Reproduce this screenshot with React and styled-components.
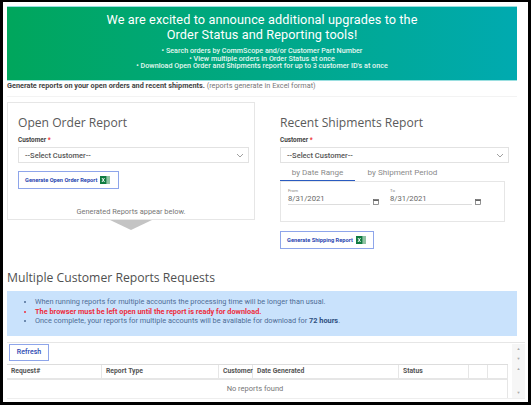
import React from 'react';
import styled, { createGlobalStyle } from 'styled-components';

const GlobalStyle = createGlobalStyle`
    html, body {
        margin: 0;
        padding: 0;
        background: #000;
    }
    * {
        box-sizing: border-box;
    }
`;

const Frame = styled.div`
    width: 531px;
    height: 405px;
    padding: 2px 3px 3px 3px;
    background: #000;
    overflow: hidden;
`;

const Page = styled.div`
    height: 100%;
    background: #fff;
    padding: 4px 11px 0 4px;
    font-family: Roboto, "Liberation Sans", sans-serif;
    color: #555;
    overflow: hidden;
`;

const Banner = styled.div`
    height: 75px;
    background: linear-gradient(90deg, #00a65c, #00aab0);
    border: 1px solid #9adfe0;
    border-width: 1px 0 1px 0;
    color: #fff;
    text-align: center;
    padding-top: 6px;
`;

const BannerTitle = styled.div`
    font-size: 12.7px;
    line-height: 14.5px;
    letter-spacing: 0.1px;
`;

const BannerList = styled.div`
    margin-top: 5px;
    font-size: 7.2px;
    line-height: 7.7px;
    font-weight: 500;
    color: #e4f7f0;
`;

const Intro = styled.div`
    font-size: 7.3px;
    line-height: 10px;
    height: 16px;
    border-bottom: 1px solid #f3f3f3;
    color: #777;
    b {
        color: #444;
        font-weight: 700;
    }
`;

const Columns = styled.div`
    display: grid;
    grid-template-columns: 248px 229px;
    column-gap: 25px;
    margin-top: 5px;
    height: 168px;
`;

const LeftColumn = styled.div`
    display: flex;
    flex-direction: column;
    align-items: center;
`;

const Card = styled.div`
    width: 100%;
    height: 118px;
    border: 1px solid #e6e6e6;
    padding: 12px 5px 0 10px;
    display: flex;
    flex-direction: column;
`;

const RightColumn = styled.div`
    padding-top: 13px;
`;

const ReportTitle = styled.div`
    font-family: "Open Sans", sans-serif;
    font-size: 12.1px;
    line-height: 16px;
    color: #5a5a5a;
`;

const FieldLabel = styled.div`
    margin-top: 5px;
    font-size: 6.4px;
    line-height: 8px;
    font-weight: 700;
    color: #444;
    span {
        color: #e33;
    }
`;

const SelectBox = styled.div`
    margin-top: 3px;
    height: 16px;
    border: 1px solid #e2e2e2;
    display: flex;
    align-items: center;
    justify-content: space-between;
    padding: 0 4px 0 6px;
    font-size: 7.5px;
    font-weight: 500;
    color: #555;
`;

const GenerateButton = styled.div`
    display: flex;
    align-items: center;
    gap: 3px;
    width: ${(p) => p.$width}px;
    height: 18px;
    border: 1px solid #8ea5ea;
    padding-left: 6px;
    font-size: 5.7px;
    font-weight: 700;
    color: #2a46b0;
    white-space: nowrap;
`;

const LeftButton = styled(GenerateButton)`
    margin-top: 8px;
`;

const RightButton = styled(GenerateButton)`
    margin-top: 9px;
`;

const CardNote = styled.div`
    margin-top: auto;
    text-align: center;
    font-size: 7.4px;
    line-height: 8px;
    color: #777;
    padding: 0 5px 3px 0;
`;

const Arrow = styled.div`
    width: 0;
    height: 0;
    border-left: 21px solid transparent;
    border-right: 21px solid transparent;
    border-top: 10px solid #c4c4c4;
`;

const Tabs = styled.div`
    display: flex;
    margin-top: 2px;
    width: 225px;
    height: 16px;
`;

const Tab = styled.div`
    width: ${(p) => p.$width}px;
    text-align: center;
    font-size: 8.1px;
    line-height: 15px;
    color: #8a8a8a;
    white-space: nowrap;
    border-bottom: 1px solid ${(p) => (p.$active ? '#2a5bc0' : 'transparent')};
`;

const TabPanel = styled.div`
    width: 225px;
    height: 41px;
    border: 1px solid #e6e6e6;
    padding: 6px 0 0 7px;
    display: flex;
    gap: 11px;
`;

const DateField = styled.div`
    display: flex;
    align-items: flex-end;
    gap: 3px;
    height: 17px;
`;

const DateInput = styled.div`
    width: 82px;
    border-bottom: 1px solid #ddd;
    font-size: 7.7px;
    color: #666;
    small {
        display: block;
        font-size: 4.4px;
        line-height: 6px;
        color: #888;
    }
    div {
        line-height: 10px;
    }
`;

const SectionHeading = styled.div`
    font-family: "Open Sans", sans-serif;
    font-size: 12.2px;
    line-height: 16px;
    color: #505050;
`;

const Notice = styled.ul`
    margin: 5px 0 0;
    height: 45px;
    padding: 6px 0 0 28px;
    background: #c9e2fc;
    font-size: 7.35px;
    line-height: 9.5px;
    color: #4e6d96;
    b {
        color: #2f4f80;
    }
`;

const NoticeRed = styled.li`
    color: #ee2d3d;
    font-weight: 700;
`;

const TableArea = styled.div`
    margin-top: 6px;
    margin-right: -8px;
    border-top: 1px solid #e6e6e6;
    border-bottom: 1px solid #eee;
`;

const ToolRow = styled.div`
    display: flex;
    justify-content: space-between;
    height: 21px;
    padding: 1px 0 0 2px;
`;

const RefreshButton = styled.div`
    width: 40px;
    height: 17px;
    border: 1px solid #8ea5ea;
    text-align: center;
    font-size: 7px;
    line-height: 15px;
    font-weight: 500;
    color: #2a46b0;
`;

const ScrollBar = styled.div`
    width: 13px;
    height: ${(p) => p.$height}px;
    background: #f6f6f6;
    display: flex;
    flex-direction: column;
    justify-content: space-between;
    align-items: center;
    padding: 3px 0;
    color: #aaa;
    font-size: 4px;
    line-height: 4px;
`;

const TableRow = styled.div`
    display: flex;
    justify-content: space-between;
`;

const TableMain = styled.div`
    width: 501px;
`;

const HeadRow = styled.div`
    display: grid;
    grid-template-columns: 95px 117px 34px 146px 70px 19px 20px;
    height: 16px;
    border-top: 1px solid #ddd;
    border-bottom: 2px solid #e6e6e6;
`;

const HeadCell = styled.div`
    font-size: 6.8px;
    line-height: 13px;
    font-weight: 700;
    color: #555;
    padding-left: 4px;
    white-space: nowrap;
    border-right: 1px solid #e6e6e6;
`;

const EmptyRow = styled.div`
    height: 18px;
    text-align: center;
    font-size: 7.5px;
    line-height: 17px;
    color: #777;
    border-right: 1px solid #e6e6e6;
    padding-right: 4px;
`;

const ExcelIcon = () => (
    <svg width="10" height="8" viewBox="0 0 10 8">
        <rect x="3" y="0" width="7" height="8" fill="#cfe3d6" />
        <rect x="6.5" y="0" width="3.5" height="8" fill="#8fc3a3" />
        <rect x="0" y="0" width="6.5" height="8" fill="#107c41" />
        <path d="M2 2 L4.5 6 M4.5 2 L2 6" stroke="#fff" strokeWidth="0.9" />
    </svg>
);

const Chevron = () => (
    <svg width="8" height="5" viewBox="0 0 8 5">
        <path d="M1 1 L4 4 L7 1" fill="none" stroke="#888" strokeWidth="0.8" />
    </svg>
);

const CalendarIcon = () => (
    <svg width="6" height="6" viewBox="0 0 6 6">
        <rect x="0.4" y="0.6" width="5.2" height="5" fill="none" stroke="#666" strokeWidth="0.7" />
        <rect x="0.4" y="0.6" width="5.2" height="1.4" fill="#666" />
    </svg>
);

const columns = ['Request#', 'Report Type', 'Customer', 'Date Generated', 'Status', '', ''];

function CustomerSelect() {
    return (
        <>
            <FieldLabel>Customer <span>*</span></FieldLabel>
            <SelectBox>
                --Select Customer--
                <Chevron />
            </SelectBox>
        </>
    );
}

function DatePicker({ label }) {
    return (
        <DateField>
            <DateInput>
                <small>{label}</small>
                <div>8/31/2021</div>
            </DateInput>
            <CalendarIcon />
        </DateField>
    );
}

export default function App() {
    return (
        <Frame>
            <GlobalStyle />
            <Page>
                <Banner>
                    <BannerTitle>
                        We are excited to announce additional upgrades to the<br />
                        Order Status and Reporting tools!
                    </BannerTitle>
                    <BannerList>
                        • Search orders by CommScope and/or Customer Part Number<br />
                        • View multiple orders in Order Status at once<br />
                        • Download Open Order and Shipments report for up to 3 customer ID's at once
                    </BannerList>
                </Banner>
                <Intro>
                    <b>Generate reports on your open orders and recent shipments.</b> (reports generate in Excel format)
                </Intro>
                <Columns>
                    <LeftColumn>
                        <Card>
                            <ReportTitle>Open Order Report</ReportTitle>
                            <CustomerSelect />
                            <LeftButton $width={101}>
                                Generate Open Order Report <ExcelIcon />
                            </LeftButton>
                            <CardNote>Generated Reports appear below.</CardNote>
                        </Card>
                        <Arrow />
                    </LeftColumn>
                    <RightColumn>
                        <ReportTitle>Recent Shipments Report</ReportTitle>
                        <CustomerSelect />
                        <Tabs>
                            <Tab $width={75} $active>by Date Range</Tab>
                            <Tab $width={95}>by Shipment Period</Tab>
                        </Tabs>
                        <TabPanel>
                            <DatePicker label="From" />
                            <DatePicker label="To" />
                        </TabPanel>
                        <RightButton $width={94}>
                            Generate Shipping Report <ExcelIcon />
                        </RightButton>
                    </RightColumn>
                </Columns>
                <SectionHeading>Multiple Customer Reports Requests</SectionHeading>
                <Notice>
                    <li>When running reports for multiple accounts the processing time will be longer than usual.</li>
                    <NoticeRed>The browser must be left open until the report is ready for download.</NoticeRed>
                    <li>Once complete, your reports for multiple accounts will be available for download for <b>72 hours</b>.</li>
                </Notice>
                <TableArea>
                    <ToolRow>
                        <RefreshButton>Refresh</RefreshButton>
                        <ScrollBar $height={20}><span>▲</span><span>▼</span></ScrollBar>
                    </ToolRow>
                    <TableRow>
                        <TableMain>
                            <HeadRow>
                                {columns.map((name, i) => (
                                    <HeadCell key={i}>{name}</HeadCell>
                                ))}
                            </HeadRow>
                            <EmptyRow>No reports found</EmptyRow>
                        </TableMain>
                        <ScrollBar $height={34}><span>▲</span><span>▼</span></ScrollBar>
                    </TableRow>
                </TableArea>
            </Page>
        </Frame>
    );
}
